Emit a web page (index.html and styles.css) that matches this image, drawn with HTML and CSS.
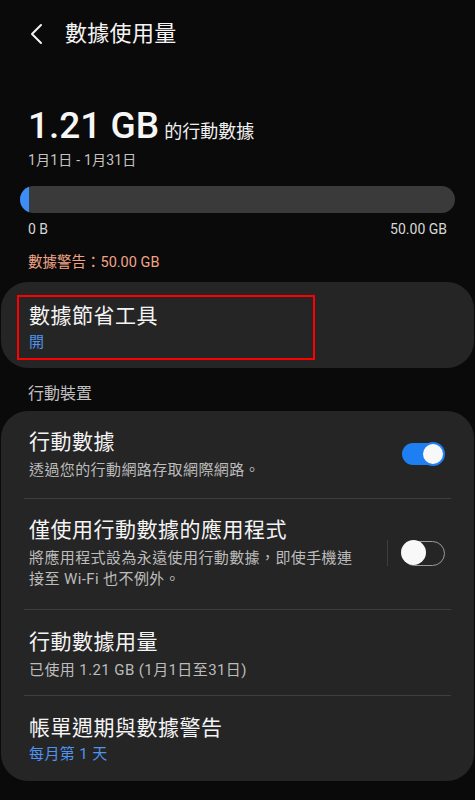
FILE: index.html
```html
<!DOCTYPE html>
<html lang="zh-Hant">
<head>
<meta charset="utf-8">
<link rel="stylesheet" href="styles.css">
</head>
<body>
<div class="screen">
  <header class="topbar">
    <svg class="back" width="14" height="22" viewBox="0 0 14 22"><path d="M11 2 L2 11 L11 20" fill="none" stroke="#f2f2f2" stroke-width="2" stroke-linecap="round" stroke-linejoin="round"/></svg>
    <h1 class="title">數據使用量</h1>
  </header>

  <section class="summary">
    <div class="big"><span class="amount">1.21 GB</span><span class="unit">的行動數據</span></div>
    <div class="period">1月1日 - 1月31日</div>
    <div class="bar"><div class="bar-fill" style="width:9px"></div></div>
    <div class="bar-labels"><span>0 B</span><span>50.00 GB</span></div>
    <div class="warning">數據警告：50.00 GB</div>
  </section>

  <section class="card card-saver">
    <div class="highlight">
      <div class="row-title">數據節省工具</div>
      <div class="row-sub blue">開</div>
    </div>
  </section>

  <div class="section-label">行動裝置</div>

  <section class="card card-list">
    <div class="row row-1">
      <div class="row-text">
        <div class="row-title">行動數據</div>
        <div class="row-sub">透過您的行動網路存取網際網路。</div>
      </div>
      <div class="switch on"><div class="knob"></div></div>
    </div>
    <div class="divider"></div>
    <div class="row row-2">
      <div class="row-text narrow">
        <div class="row-title">僅使用行動數據的應用程式</div>
        <div class="row-sub multi">將應用程式設為永遠使用行動數據，即使手機連接至 Wi-Fi 也不例外。</div>
      </div>
      <div class="vsep"></div>
      <div class="switch off"><div class="knob"></div></div>
    </div>
    <div class="divider"></div>
    <div class="row row-3">
      <div class="row-text">
        <div class="row-title">行動數據用量</div>
        <div class="row-sub">已使用 1.21 GB (1月1日至31日)</div>
      </div>
    </div>
    <div class="divider"></div>
    <div class="row row-4">
      <div class="row-text">
        <div class="row-title">帳單週期與數據警告</div>
        <div class="row-sub blue">每月第 1 天</div>
      </div>
    </div>
  </section>
</div>
</body>
</html>
```

FILE: styles.css
```css
* { box-sizing: border-box; }
html, body {
  margin: 0;
  padding: 0;
  background: #0a0a0a;
}
body {
  font-family: Roboto, "Noto Sans CJK TC", sans-serif;
  color: #f2f2f2;
  width: 475px;
  height: 800px;
  overflow: hidden;
}
.screen {
  display: flex;
  flex-direction: column;
}
.topbar {
  height: 68px;
  display: flex;
  align-items: center;
  padding-left: 30px;
}
.back {
  display: block;
}
.title {
  margin: 0 0 0 21px;
  font-size: 22px;
  font-weight: 400;
  line-height: 30px;
  color: #f4f4f4;
  letter-spacing: 0.3px;
}
.summary {
  padding: 36px 20px 0 20px;
  display: flex;
  flex-direction: column;
}
.big {
  display: flex;
  align-items: baseline;
  padding-left: 8px;
  line-height: 44px;
  height: 44px;
}
.amount {
  font-size: 37px;
  font-weight: 500;
  color: #f6f6f6;
}
.unit {
  font-size: 18px;
  margin-left: 5px;
  color: #f0f0f0;
}
.period {
  padding-left: 8px;
  font-size: 14px;
  line-height: 20px;
  margin-top: 2px;
  color: #c4c4c4;
  letter-spacing: 0.2px;
}
.bar {
  margin-top: 16px;
  height: 27px;
  border-radius: 14px;
  background: #3a3a3a;
  overflow: hidden;
}
.bar-fill {
  height: 100%;
  background: #3d8df6;
}
.bar-labels {
  display: flex;
  justify-content: space-between;
  padding: 0 8px;
  margin-top: 6px;
  font-size: 14px;
  line-height: 20px;
  color: #d8d8d8;
}
.warning {
  padding-left: 8px;
  margin-top: 14px;
  font-size: 14.5px;
  line-height: 20px;
  color: #f0a487;
}
.card {
  background: #252525;
  margin: 0 1px;
  border-radius: 27px;
}
.card-saver {
  margin-top: 9px;
  height: 86px;
  padding: 13px 0 0 16px;
}
.highlight {
  width: 298px;
  height: 65px;
  border: 2px solid #ff0000;
  padding: 5px 0 0 10px;
}
.row-title {
  font-size: 21px;
  line-height: 28px;
  color: #f4f4f4;
  letter-spacing: 0.5px;
}
.row-sub {
  font-size: 15px;
  line-height: 20px;
  color: #bcbcbc;
  letter-spacing: 0.4px;
}
.highlight .row-sub { margin-top: 2px; }
.blue { color: #4f94f0; }
.section-label {
  margin-top: 16px;
  padding-left: 28px;
  font-size: 16px;
  line-height: 20px;
  color: #c0c0c0;
}
.card-list {
  margin-top: 7px;
  padding-bottom: 17px;
}
.row {
  display: flex;
  align-items: center;
  padding: 0 30px 0 28px;
}
.row-text {
  flex: 1;
  display: flex;
  flex-direction: column;
}
.row-text .row-sub { margin-top: 4px; }
.row-1 { padding-top: 17px; padding-bottom: 18px; }
.row-2 { padding-top: 17px; padding-bottom: 19px; }
.row-3 { padding-top: 18px; padding-bottom: 15px; }
.row-4 { padding-top: 18px; }
.row-4 .row-sub { margin-top: 2px; }
.narrow { flex: 0 0 336px; }
.multi { line-height: 21px; }
.divider {
  height: 1px;
  margin: 0 23px;
  background: #3e3e3e;
}
.vsep {
  flex: none;
  width: 1px;
  height: 26px;
  background: #3e3e3e;
  margin: 0 14px 0 22px;
}
.switch {
  position: relative;
  width: 42px;
  height: 22px;
  border-radius: 11px;
  flex: none;
}
.switch.on {
  background: #1e7ff3;
}
.switch.off {
  border: 1.5px solid #9a9a9a;
  width: 43px;
  height: 25px;
  border-radius: 13px;
}
.knob {
  position: absolute;
  width: 24px;
  height: 24px;
  border-radius: 50%;
  background: #f8f8f8;
}
.switch.on .knob {
  right: -1px;
  top: -1px;
  border: 2px solid #1e7ff3;
}
.switch.off .knob {
  left: -2px;
  top: -1.5px;
  width: 25px;
  height: 25px;
}
```
